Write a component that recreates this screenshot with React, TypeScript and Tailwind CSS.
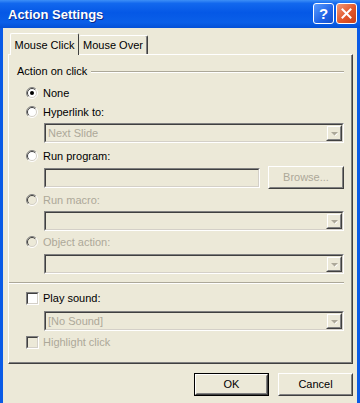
import React from 'react'

const DISABLED = 'text-[#aca899]'

const Radio: React.FC<{ checked?: boolean; disabled?: boolean }> = ({ checked, disabled }) => (
  <svg width="12" height="12" viewBox="0 0 12 12" className="shrink-0">
    <circle cx="6" cy="6" r="5" fill={disabled ? '#ece9d8' : '#ffffff'} />
    <path d="M2.1 9.9 A5.5 5.5 0 0 1 9.9 2.1" fill="none" stroke="#808080" strokeWidth="1" />
    <path d="M9.9 2.1 A5.5 5.5 0 0 1 2.1 9.9" fill="none" stroke="#ffffff" strokeWidth="1" />
    <path d="M2.8 9.2 A4.5 4.5 0 0 1 9.2 2.8" fill="none" stroke="#404040" strokeWidth="1" />
    <path d="M9.2 2.8 A4.5 4.5 0 0 1 2.8 9.2" fill="none" stroke="#d4d0c8" strokeWidth="1" />
    {checked && <circle cx="6" cy="6" r="2" fill="#000000" />}
  </svg>
)

const Checkbox: React.FC<{ disabled?: boolean }> = ({ disabled }) => (
  <div className="h-[13px] w-[13px] shrink-0 border border-t-[#808080] border-l-[#808080] border-r-white border-b-white">
    <div
      className={`h-full w-full border border-t-[#404040] border-l-[#404040] border-r-[#d4d0c8] border-b-[#d4d0c8] ${
        disabled ? 'bg-[#ece9d8]' : 'bg-white'
      }`}
    />
  </div>
)

const Sunken: React.FC<{ className?: string; children?: React.ReactNode }> = ({ className, children }) => (
  <div className={`border border-t-[#808080] border-l-[#808080] border-r-white border-b-white ${className ?? ''}`}>
    <div className="flex h-full w-full items-center border border-t-[#404040] border-l-[#404040] border-r-[#d4d0c8] border-b-[#d4d0c8] bg-[#ece9d8]">
      {children}
    </div>
  </div>
)

const Combo: React.FC<{ value?: string }> = ({ value }) => (
  <Sunken className="ml-[35px] mr-[7px] h-[20px]">
    <span className={`flex-1 pl-[2px] ${DISABLED}`}>{value}</span>
    <div className="h-full w-[16px] border border-t-[#ece9d8] border-l-[#ece9d8] border-r-[#404040] border-b-[#404040]">
      <div className="flex h-full w-full items-center justify-center border border-t-white border-l-white border-r-[#808080] border-b-[#808080] bg-[#ece9d8]">
        <svg width="7" height="5" viewBox="0 0 7 5">
          <path d="M1 2 L6 2 L3.5 4.5 Z" fill="#ffffff" transform="translate(1 0.5)" />
          <path d="M0 1 L7 1 L3.5 4.5 Z" fill="#aca899" />
        </svg>
      </div>
    </div>
  </Sunken>
)

const Button: React.FC<{ label: string; def?: boolean; disabled?: boolean; className?: string }> = ({
  label,
  def,
  disabled,
  className,
}) => {
  const face = (
    <div className="h-full w-full border border-t-white border-l-white border-r-[#404040] border-b-[#404040]">
      <div
        className={`flex h-full w-full items-center justify-center border border-t-[#ece9d8] border-l-[#ece9d8] border-r-[#808080] border-b-[#808080] bg-[#ece9d8] ${
          disabled ? DISABLED : 'text-black'
        }`}
      >
        {label}
      </div>
    </div>
  )
  return def ? (
    <div className={`border border-black ${className ?? ''}`}>{face}</div>
  ) : (
    <div className={className}>{face}</div>
  )
}

const OptionRow: React.FC<{ label: string; checked?: boolean; disabled?: boolean; className?: string }> = ({
  label,
  checked,
  disabled,
  className,
}) => (
  <div className={`flex h-[14px] items-center gap-[5px] pl-[17px] ${className ?? ''}`}>
    <Radio checked={checked} disabled={disabled} />
    <span className={disabled ? DISABLED : 'text-black'}>{label}</span>
  </div>
)

const CheckRow: React.FC<{ label: string; disabled?: boolean; className?: string }> = ({
  label,
  disabled,
  className,
}) => (
  <div className={`flex h-[14px] items-center gap-[4px] pl-[17px] ${className ?? ''}`}>
    <Checkbox disabled={disabled} />
    <span className={disabled ? DISABLED : 'text-black'}>{label}</span>
  </div>
)

export default function App() {
  return (
    <div
      className="flex h-[403px] w-[360px] flex-col overflow-hidden bg-[#0a5be6] text-[11px] leading-[13px]"
      style={{ fontFamily: '"Liberation Sans", Arial, sans-serif' }}
    >
      {/* title bar */}
      <div className="flex h-[28px] shrink-0 items-center bg-[linear-gradient(to_bottom,#3d8ff7_0%,#1268ee_12%,#0558e6_45%,#0a5fe8_80%,#0450d6_100%)] pl-[8px] pr-[3px]">
        <span className="flex-1 text-[13px] font-bold text-white [text-shadow:1px_1px_0_#0a2a8a]">
          Action Settings
        </span>
        <div className="flex items-center gap-[2px] pb-[1px]">
          <div className="flex h-[21px] w-[21px] items-center justify-center rounded-[3px] border border-white bg-[linear-gradient(to_bottom_right,#5a9bff,#1f63e6_60%,#1550cc)] text-[15px] font-bold text-white">
            ?
          </div>
          <div className="flex h-[21px] w-[21px] items-center justify-center rounded-[3px] border border-white bg-[linear-gradient(to_bottom_right,#f09a7a,#e2562a_55%,#c8401a)]">
            <svg width="11" height="11" viewBox="0 0 11 11">
              <path d="M1.5 1.5 L9.5 9.5 M9.5 1.5 L1.5 9.5" stroke="#ffffff" strokeWidth="2" strokeLinecap="square" />
            </svg>
          </div>
        </div>
      </div>

      {/* client area */}
      <div className="mx-[3px] flex flex-1 flex-col bg-[#ece9d8] pt-[5px]">
        {/* tabs */}
        <div className="relative z-10 -mb-px flex h-[22px] items-end pl-[7px]">
          <div className="flex h-[22px] w-[69px] items-start justify-center rounded-t-[2px] border-t border-l border-r border-t-white border-l-white border-r-[#404040] bg-[#ece9d8] pt-[5px]">
            Mouse Click
          </div>
          <div className="mb-px flex h-[19px] w-[69px] items-start justify-center rounded-t-[2px] border-t border-r border-t-white border-r-[#404040] pt-[3px] shadow-[inset_-1px_0_0_#808080]">
            Mouse Over
          </div>
        </div>

        {/* panel */}
        <div className="ml-[5px] h-[310px] w-[345px] border border-t-white border-l-white border-r-[#404040] border-b-[#404040]">
          <div className="flex h-full w-full flex-col border-r border-b border-r-[#808080] border-b-[#808080]">
            <div className="mt-[10px] flex h-[13px] items-center gap-[4px] pl-[8px] pr-[7px]">
              <span>Action on click</span>
              <div className="h-[2px] flex-1 border-t border-b border-t-[#aca899] border-b-white" />
            </div>

            <OptionRow label="None" checked className="mt-[8px]" />
            <OptionRow label="Hyperlink to:" className="mt-[5px]" />
            <div className="mt-[4px]">
              <Combo value="Next Slide" />
            </div>
            <OptionRow label="Run program:" className="mt-[6px]" />
            <div className="mt-[3px] flex h-[23px] items-center gap-[8px] pl-[35px] pr-[7px]">
              <Sunken className="h-[20px] w-[216px]" />
              <Button label="Browse..." disabled className="h-[23px] flex-1" />
            </div>
            <OptionRow label="Run macro:" disabled className="mt-[4px]" />
            <div className="mt-[4px]">
              <Combo />
            </div>
            <OptionRow label="Object action:" disabled className="mt-[4px]" />
            <div className="mt-[5px]">
              <Combo />
            </div>

            <div className="mr-[7px] mt-[8px] h-[2px] border-t border-b border-t-[#aca899] border-b-white" />

            <CheckRow label="Play sound:" className="mt-[7px]" />
            <div className="mt-[6px]">
              <Combo value="[No Sound]" />
            </div>
            <CheckRow label="Highlight click" disabled className="mt-[4px]" />
          </div>
        </div>

        {/* buttons */}
        <div className="mr-[4px] mt-[9px] flex justify-end gap-[9px]">
          <Button label="OK" def className="h-[23px] w-[75px]" />
          <Button label="Cancel" className="h-[23px] w-[75px]" />
        </div>
      </div>
    </div>
  )
}
